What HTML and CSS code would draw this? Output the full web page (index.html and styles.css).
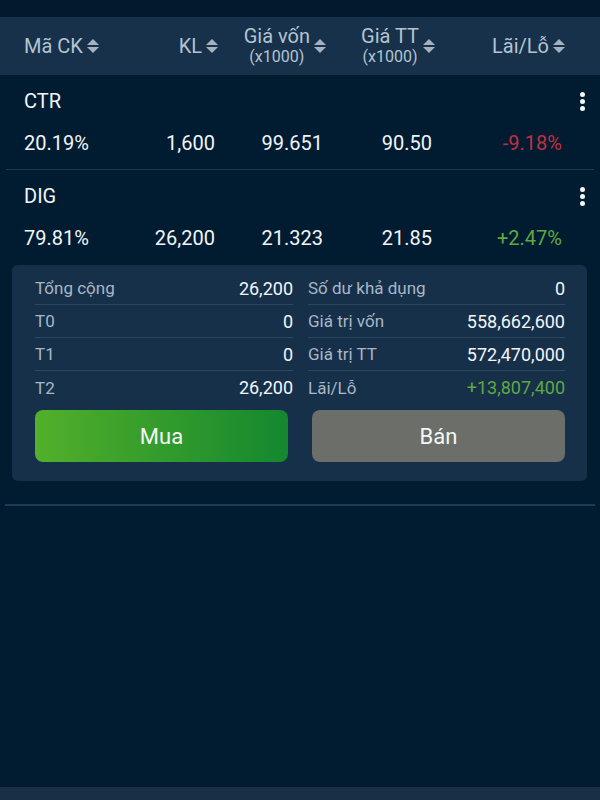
FILE: index.html
```html
<!DOCTYPE html>
<html lang="vi">
<head>
    <meta charset="UTF-8">
    <meta name="viewport" content="width=device-width, initial-scale=1.0">
    <title>Danh mục</title>
    <link rel="stylesheet" href="styles.css">
</head>
<body>
    <div class="top"></div>

    <div class="head cols">
        <div class="th left">Mã CK <span class="sort"></span></div>
        <div class="th">KL <span class="sort"></span></div>
        <div class="th"><span class="two">Giá vốn<small>(x1000)</small></span> <span class="sort"></span></div>
        <div class="th"><span class="two">Giá TT<small>(x1000)</small></span> <span class="sort"></span></div>
        <div class="th">Lãi/Lỗ <span class="sort"></span></div>
    </div>

    <div class="stock line">
        <div class="name">CTR <span class="more"><i></i><i></i><i></i></span></div>
        <div class="cols vals">
            <span class="left">20.19%</span>
            <span>1,600</span>
            <span>99.651</span>
            <span>90.50</span>
            <span class="down">-9.18%</span>
        </div>
    </div>

    <div class="stock">
        <div class="name">DIG <span class="more"><i></i><i></i><i></i></span></div>
        <div class="cols vals">
            <span class="left">79.81%</span>
            <span>26,200</span>
            <span>21.323</span>
            <span>21.85</span>
            <span class="up">+2.47%</span>
        </div>
    </div>

    <div class="card">
        <div class="sum">
            <div class="col">
                <div class="row"><span>Tổng cộng</span><b>26,200</b></div>
                <div class="row"><span>T0</span><b>0</b></div>
                <div class="row"><span>T1</span><b>0</b></div>
                <div class="row"><span>T2</span><b>26,200</b></div>
            </div>
            <div class="col">
                <div class="row"><span>Số dư khả dụng</span><b>0</b></div>
                <div class="row"><span>Giá trị vốn</span><b>558,662,600</b></div>
                <div class="row"><span>Giá trị TT</span><b>572,470,000</b></div>
                <div class="row"><span>Lãi/Lỗ</span><b class="up">+13,807,400</b></div>
            </div>
        </div>
        <div class="btns">
            <button class="buy">Mua</button>
            <button class="sell">Bán</button>
        </div>
    </div>

    <hr class="divider">

    <div class="bottom"></div>
</body>
</html>
```

FILE: styles.css
```css
* {
    box-sizing: border-box;
}

body {
    margin: 0;
    height: 800px;
    background: #011c31;
    font-family: Roboto, "Liberation Sans", sans-serif;
    color: #f2f5f8;
    display: flex;
    flex-direction: column;
    overflow: hidden;
}

.top {
    height: 17px;
    background: #021a2d;
}

.cols {
    display: grid;
    grid-template-columns: 96px 98px 108px 109px 130px;
    padding-left: 24px;
}

.cols > * {
    text-align: right;
}

.cols .left {
    text-align: left;
    justify-content: flex-start;
}

.head {
    height: 58px;
    background: #17314b;
    color: #b4c3d1;
    font-size: 20px;
}

.th {
    display: flex;
    align-items: center;
    justify-content: flex-end;
    gap: 4px;
}

.two {
    display: flex;
    flex-direction: column;
    align-items: center;
    line-height: 22px;
}

.two small {
    font-size: 16px;
    line-height: 20px;
}

.sort {
    display: inline-flex;
    flex-direction: column;
    gap: 2px;
    width: 12px;
}

.sort::before,
.sort::after {
    content: "";
    border-left: 6px solid transparent;
    border-right: 6px solid transparent;
}

.sort::before {
    border-bottom: 6px solid #a4b2bf;
}

.sort::after {
    border-top: 6px solid #a4b2bf;
}

.stock {
    margin: 0 6px;
    padding: 15px 0 16px 0;
    font-size: 20px;
}

.stock.line {
    padding-bottom: 15px;
    border-bottom: 1px solid #1c3850;
}

.stock .cols {
    padding-left: 18px;
}

.vals > span {
    padding-right: 3px;
}

.vals > .left {
    padding-right: 0;
}

.name {
    display: flex;
    justify-content: space-between;
    align-items: center;
    line-height: 22px;
    padding-left: 18px;
    padding-right: 9px;
    margin-bottom: 20px;
}

.vals {
    line-height: 22px;
}

.more {
    display: flex;
    flex-direction: column;
    gap: 2px;
}

.more i {
    width: 5px;
    height: 5px;
    border-radius: 50%;
    background: #f2f5f8;
}

.down {
    color: #c0303f;
}

.up {
    color: #5ea842;
}

.card {
    margin: 0 13px 0 12px;
    padding: 7px 22px 19px 23px;
    background: #17304a;
    border-radius: 6px;
}

.sum {
    display: grid;
    grid-template-columns: 258px 257px;
    gap: 15px;
}

.row {
    display: flex;
    justify-content: space-between;
    align-items: center;
    height: 33px;
    border-bottom: 1px solid #2a4660;
    font-size: 17px;
    color: #a8b7c6;
}

.row:last-child {
    border-bottom: none;
}

.row b {
    font-weight: normal;
    font-size: 18px;
    color: #f2f5f8;
}

.row b.up {
    color: #5ea842;
}

.btns {
    display: grid;
    grid-template-columns: 1fr 1fr;
    gap: 24px;
    margin-top: 6px;
}

.btns button {
    height: 52px;
    border: none;
    border-radius: 8px;
    font-family: inherit;
    font-size: 22px;
    color: #f4f7f4;
}

.buy {
    background: linear-gradient(90deg, #52b02a, #14872f);
}

.sell {
    background: #6b6e69;
}

.divider {
    margin: 23px 5px 0 5px;
    border: none;
    height: 2px;
    background: #1d3b53;
}

.bottom {
    margin-top: auto;
    height: 13px;
    background: #182f45;
}
```
